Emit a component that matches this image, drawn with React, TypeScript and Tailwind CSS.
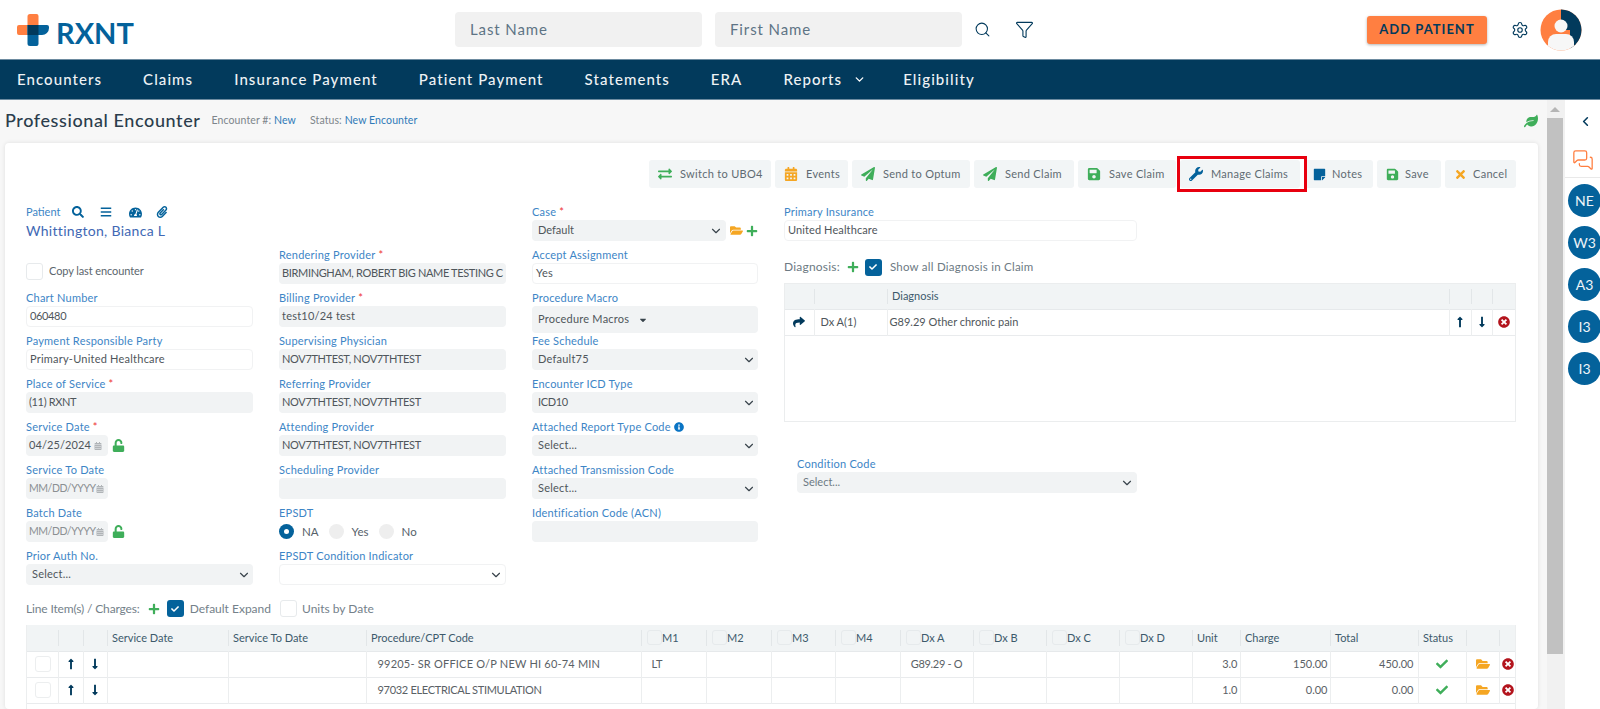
import React from "react";
import { ChevronDown, ChevronLeft, Filter, MessagesSquare, Search, Settings } from "lucide-react";
import {
  FaBars, FaCalendarAlt, FaCaretDown, FaCheck, FaExchangeAlt, FaFolderOpen, FaInfoCircle, FaLeaf,
  FaLongArrowAltDown, FaLongArrowAltUp, FaPaperPlane, FaPaperclip, FaPlus, FaSave, FaSearch, FaShare,
  FaStickyNote, FaTachometerAlt, FaTimes, FaTimesCircle, FaUnlock, FaWrench,
} from "react-icons/fa";

const Logo = () => (
  <div className="flex items-center gap-[7px]">
    <svg width="32" height="32" viewBox="0 0 32 32">
      <path d="M13 0h6.5a2 2 0 0 1 2 2v9h-11v10H2a2 2 0 0 1-2-2v-6a2 2 0 0 1 2-2h8.5V2.500A2.500 2.500 0 0 1 13 0z" fill="#ff7f41" />
      <path d="M10.500 11H30a2 2 0 0 1 2 2v1a7 7 0 0 1-7 7h-3.500v9a2 2 0 0 1-2 2H13a2.500 2.500 0 0 1-2.500-2.500z" fill="#04629b" />
      <rect x="10.500" y="11" width="11" height="10" fill="#023a5c" />
    </svg>
    <span className="mt-[6px] font-['Lato',sans-serif] text-[29px] font-bold leading-none text-[#04629b]">RXNT</span>
  </div>
);

const Avatar = () => (
  <svg width="42" height="42" viewBox="0 0 42 42">
    <defs>
      <clipPath id="avatarClip"><circle cx="21" cy="21" r="20.500" /></clipPath>
    </defs>
    <g clipPath="url(#avatarClip)">
      <rect width="42" height="42" fill="#ff7f41" />
      <path d="M21 0h21v42H30V21H21z" fill="#023a5c" />
      <circle cx="21" cy="17" r="6.500" fill="#f7f7f7" />
      <path d="M8 42V33a8 8 0 0 1 8-8h10a8 8 0 0 1 8 8v9z" fill="#f7f7f7" />
    </g>
  </svg>
);

const navItems = ["Encounters", "Claims", "Insurance Payment", "Patient Payment", "Statements", "ERA", "Reports", "Eligibility"];

const Header = () => (
  <div className="flex h-[59px] items-center bg-white pl-[17px]">
    <div className="w-[438px] shrink-0"><Logo /></div>
    <div className="flex h-[35px] w-[247px] items-center rounded-[4px] bg-[#f1f1f1] pl-[15px] text-[15px] tracking-[0.9px] text-[#5e7485]">Last Name</div>
    <div className="ml-[13px] flex h-[35px] w-[247px] items-center rounded-[4px] bg-[#f1f1f1] pl-[15px] text-[15px] tracking-[0.9px] text-[#5e7485]">First Name</div>
    <Search className="ml-[12px] text-[#023a5c]" size={17} strokeWidth={1.5} />
    <Filter className="ml-[24px] text-[#023a5c]" size={19} strokeWidth={1.4} />
    <div className="ml-[333px] flex h-[28px] w-[120px] items-center justify-center rounded-[3px] bg-[#ff7f41] text-[13px] font-bold tracking-[1px] text-[#023a5c] shadow-[0_1px_3px_rgba(0,0,0,0.3)]">ADD PATIENT</div>
    <Settings className="ml-[24px] text-[#023a5c]" size={18} strokeWidth={1.5} />
    <div className="ml-[11px]"><Avatar /></div>
  </div>
);

const Nav = () => (
  <div className="flex h-[41px] items-center gap-[41px] border-y border-[#6d8ba0] bg-[#023a5c] pl-[17px] text-[15px] font-medium tracking-[1.07px] text-[#eef2f5]">
    {navItems.map((n) => (
      <span key={n} className="flex items-center">
        {n}
        {n === "Reports" && <ChevronDown className="-mr-[4px] ml-[11px] text-white" size={13} strokeWidth={2.5} />}
      </span>
    ))}
  </div>
);

const ToolButton = ({ icon, label, w, gap }: { icon: React.ReactNode; label: string; w: string; gap?: boolean }) => (
  <div className={`flex h-[28px] items-center rounded-[3px] bg-[#f2f5f6] pl-[8px] text-[11px] tracking-[0.3px] text-[#5f6b72] ${gap ? "gap-[5px]" : "gap-[8px]"} ${w}`}>
    <span className="flex w-[15px] justify-center">{icon}</span>
    <span className="whitespace-nowrap">{label}</span>
  </div>
);

const Toolbar = () => (
  <div className="flex h-[28px] justify-end gap-[4px]">
    <ToolButton w="w-[122px]" icon={<FaExchangeAlt className="text-[#3fae5a]" size={14} />} label="Switch to UBO4" />
    <ToolButton w="w-[73px]" icon={<FaCalendarAlt className="text-[#f5a623]" size={14} />} label="Events" />
    <ToolButton w="w-[118px]" icon={<FaPaperPlane className="text-[#3fae5a]" size={14} />} label="Send to Optum" />
    <ToolButton w="w-[100px]" icon={<FaPaperPlane className="text-[#3fae5a]" size={14} />} label="Send Claim" />
    <ToolButton w="w-[98px]" icon={<FaSave className="text-[#3fae5a]" size={14} />} label="Save Claim" />
    <div className="relative">
      <ToolButton w="w-[120px]" icon={<FaWrench className="text-[#04629b]" size={14} />} label="Manage Claims" />
      <div className="absolute -bottom-[4px] -left-[3px] -right-[7px] -top-[4px] z-10 border-[3px] border-[#e8000f]" />
    </div>
    <ToolButton gap w="w-[69px]" icon={<FaStickyNote className="text-[#04629b]" size={13} />} label="Notes" />
    <ToolButton gap w="w-[64px]" icon={<FaSave className="text-[#3fae5a]" size={13} />} label="Save" />
    <ToolButton gap w="w-[71px]" icon={<FaTimes className="text-[#f5a623]" size={13} />} label="Cancel" />
  </div>
);

const Label = ({ text, req, info }: { text: string; req?: boolean; info?: boolean }) => (
  <div className="flex h-[16px] items-center whitespace-nowrap text-[11px] tracking-[0.22px] text-[#3d85c6]">
    {text}
    {req && <span className="ml-[3px] text-[#e33]">*</span>}
    {info && <FaInfoCircle className="ml-[3px] text-[#0a74c4]" size={10} />}
  </div>
);

const Field = ({
  label, value, req, info, white, select, caps,
}: { label: string; value?: string; req?: boolean; info?: boolean; white?: boolean; select?: boolean; caps?: boolean }) => (
  <div className="h-[43px]">
    <Label text={label} req={req} info={info} />
    <div
      className={`flex h-[21px] items-center justify-between overflow-hidden rounded-[4px] pr-[2px] text-[11px] ${select ? "pl-[6px]" : "pl-[3px]"} ${
        caps ? "tracking-[-0.35px]" : "tracking-[0.22px]"
      } ${white ? "border border-[#f1f2f3] bg-white" : "bg-[#f1f3f4]"} text-[#4f565b]`}
    >
      <span className="whitespace-nowrap">{value}</span>
      {select && <ChevronDown className="shrink-0 text-[#39444c]" size={14} strokeWidth={2} />}
    </div>
  </div>
);

const DateField = ({ label, value, req, lock, placeholder }: { label: string; value: string; req?: boolean; lock?: boolean; placeholder?: boolean }) => (
  <div className="h-[43px]">
    <Label text={label} req={req} />
    <div className="flex items-center">
      <div className={`flex h-[21px] w-[82px] items-center justify-between rounded-[4px] bg-[#f1f3f4] pl-[3px] pr-[6px] ${placeholder ? "text-[10.500px] tracking-[-0.45px] text-[#8b8f92]" : "text-[11px] tracking-[0.1px] text-[#4f565b]"}`}>
        <span className="whitespace-nowrap">{value}</span>
        <FaCalendarAlt className="shrink-0 text-[#b0b4b7]" size={8} />
      </div>
      {lock && <FaUnlock className="ml-[4px] text-[#3fae5a]" size={13} />}
    </div>
  </div>
);

const Check = ({ on }: { on?: boolean }) =>
  on ? (
    <div className="flex h-[17px] w-[17px] shrink-0 items-center justify-center rounded-[3px] bg-[#04629b]">
      <FaCheck className="text-white" size={8} />
    </div>
  ) : (
    <div className="h-[17px] w-[17px] shrink-0 rounded-[3px] border border-[#e7eaec] bg-white" />
  );

const Radio = ({ on, label }: { on?: boolean; label: string }) => (
  <div className="flex items-center gap-[8px]">
    {on ? (
      <div className="flex h-[15px] w-[15px] items-center justify-center rounded-full bg-[#04629b]">
        <div className="h-[5px] w-[5px] rounded-full bg-white" />
      </div>
    ) : (
      <div className="h-[15px] w-[15px] rounded-full bg-[#eeeeee]" />
    )}
    <span className="text-[11.500px] text-[#56616a]">{label}</span>
  </div>
);

const ColumnOne = () => (
  <div>
    <div className="h-[43px] pt-[1px]">
      <div className="flex h-[14px] items-center text-[11px] text-[#3d85c6]">
        <span className="w-[46px]">Patient</span>
        <FaSearch className="text-[#04629b]" size={12} />
        <FaBars className="ml-[16px] text-[#04629b]" size={12} />
        <FaTachometerAlt className="ml-[17px] text-[#04629b]" size={13} />
        <FaPaperclip className="ml-[14px] text-[#04629b]" size={12} />
      </div>
      <div className="mt-[2px] text-[14px] leading-[20px] tracking-[0.3px] text-[#4168b4]">Whittington, Bianca L</div>
    </div>
    <div className="flex h-[43px] items-start pt-[16px]">
      <Check />
      <span className="ml-[6px] whitespace-nowrap text-[11px] tracking-[-0.1px] text-[#5b666d]">Copy last encounter</span>
    </div>
    <Field label="Chart Number" value="060480" white caps />
    <Field label="Payment Responsible Party" value="Primary-United Healthcare" white />
    <Field label="Place of Service" value="(11) RXNT" req caps />
    <DateField label="Service Date" value="04/25/2024" req lock />
    <DateField label="Service To Date" value="MM/DD/YYYY" placeholder />
    <DateField label="Batch Date" value="MM/DD/YYYY" placeholder lock />
    <Field label="Prior Auth No." value="Select..." select />
  </div>
);

const ColumnTwo = () => (
  <div className="pt-[43px]">
    <Field label="Rendering Provider" value="BIRMINGHAM, ROBERT BIG NAME TESTING C" req caps />
    <Field label="Billing Provider" value="test10/24 test" req />
    <Field label="Supervising Physician" value="NOV7THTEST, NOV7THTEST" caps />
    <Field label="Referring Provider" value="NOV7THTEST, NOV7THTEST" caps />
    <Field label="Attending Provider" value="NOV7THTEST, NOV7THTEST" caps />
    <Field label="Scheduling Provider" />
    <div className="h-[43px]">
      <Label text="EPSDT" />
      <div className="flex h-[21px] items-center gap-[10px]">
        <Radio on label="NA" />
        <Radio label="Yes" />
        <Radio label="No" />
      </div>
    </div>
    <Field label="EPSDT Condition Indicator" white select />
  </div>
);

const ColumnThree = () => (
  <div>
    <div className="h-[43px]">
      <Label text="Case" req />
      <div className="flex items-center">
        <div className="flex h-[21px] w-[194px] items-center justify-between rounded-[4px] bg-[#f1f3f4] pl-[6px] pr-[3px] text-[11px] text-[#4f565b]">
          Default
          <ChevronDown className="shrink-0 text-[#39444c]" size={14} />
        </div>
        <FaFolderOpen className="ml-[4px] text-[#f5a623]" size={13} />
        <FaPlus className="ml-[3px] text-[#3fae5a]" size={12} />
      </div>
    </div>
    <Field label="Accept Assignment" value="Yes" white />
    <div className="h-[43px]">
      <Label text="Procedure Macro" />
      <div className="flex h-[27px] items-center rounded-[4px] bg-[#f1f3f4] pl-[6px] text-[11px] tracking-[0.22px] text-[#4f565b]">
        Procedure Macros
        <FaCaretDown className="ml-[9px] text-[#39444c]" size={10} />
      </div>
    </div>
    <Field label="Fee Schedule" value="Default75" select />
    <Field label="Encounter ICD Type" value="ICD10" select caps />
    <Field label="Attached Report Type Code" value="Select..." select info />
    <Field label="Attached Transmission Code" value="Select..." select />
    <Field label="Identification Code (ACN)" />
  </div>
);

const DiagnosisTable = () => (
  <div className="h-[139px] border border-[#ebedee] text-[11px] text-[#4f565b]">
    <table className="w-full table-fixed border-collapse">
      <colgroup>
        <col className="w-[29px]" />
        <col className="w-[73px]" />
        <col />
        <col className="w-[22px]" />
        <col className="w-[21px]" />
        <col className="w-[23px]" />
      </colgroup>
      <thead>
        <tr className="h-[25px] border-b border-[#e6e9eb] bg-[#f1f4f5]">
          <th />
          <th className="p-0"><div className="h-[15px] border-l border-[#e2e6e8]" /></th>
          <th className="p-0 text-left font-normal text-[#3d5a6c]"><div className="flex h-[15px] items-center border-l border-[#e2e6e8] pl-[4px]">Diagnosis</div></th>
          <th className="p-0"><div className="h-[15px] border-l border-[#e2e6e8]" /></th>
          <th className="p-0"><div className="h-[15px] border-l border-[#e2e6e8]" /></th>
          <th className="p-0"><div className="h-[15px] border-l border-[#e2e6e8]" /></th>
        </tr>
      </thead>
      <tbody>
        <tr className="h-[26px] border-b border-[#e9ebed]">
          <td className="border-r border-[#eceeef] p-0"><FaShare className="mx-auto text-[#023a5c]" size={12} /></td>
          <td className="border-r border-[#eceeef] p-0 pl-[6px]">Dx A(1)</td>
          <td className="p-0 pl-[2px]">G89.29 Other chronic pain</td>
          <td className="border-x border-[#eceeef] p-0"><FaLongArrowAltUp className="mx-auto text-[#023a5c]" size={12} /></td>
          <td className="border-r border-[#eceeef] p-0"><FaLongArrowAltDown className="mx-auto text-[#023a5c]" size={12} /></td>
          <td className="p-0"><FaTimesCircle className="mx-auto text-[#b3141d]" size={12} /></td>
        </tr>
      </tbody>
    </table>
  </div>
);

const ColumnFour = () => (
  <div>
    <div className="h-[43px]">
      <Label text="Primary Insurance" />
      <div className="flex h-[21px] w-[353px] items-center rounded-[4px] border border-[#f1f2f3] bg-white pl-[3px] text-[11px] tracking-[0.1px] text-[#4f565b]">United Healthcare</div>
    </div>
    <div className="flex h-[36px] items-center pt-[4px]">
      <span className="text-[12px] tracking-[0.2px] text-[#6d7a83]">Diagnosis:</span>
      <FaPlus className="ml-[7px] text-[#3fae5a]" size={12} />
      <div className="ml-[6px]"><Check on /></div>
      <span className="ml-[8px] text-[11.500px] tracking-[0.25px] text-[#6d7a83]">Show all Diagnosis in Claim</span>
    </div>
    <DiagnosisTable />
    <div className="ml-[13px] mt-[34px] w-[340px]">
      <Label text="Condition Code" />
      <div className="flex h-[21px] items-center justify-between rounded-[4px] bg-[#f1f3f4] pl-[6px] pr-[3px] text-[11px] text-[#6d7a83]">
        Select...
        <ChevronDown className="shrink-0 text-[#39444c]" size={14} />
      </div>
    </div>
  </div>
);

const chargeCols = [31, 25, 24, 121, 138, 275, 65, 65, 64, 65, 73, 73, 73, 73, 48, 90, 88, 48, 33, 16];
const headers = ["", "", "", "Service Date", "Service To Date", "Procedure/CPT Code"];
const checkHeaders = ["M1", "M2", "M3", "M4", "Dx A", "Dx B", "Dx C", "Dx D"];
const tailHeaders = ["Unit", "Charge", "Total", "Status", "", ""];

const Td = ({ children, right, center }: { children?: React.ReactNode; right?: boolean; center?: boolean }) => (
  <td className={`border-r border-[#eceeef] p-0 ${right ? "pr-[2px] text-right" : center ? "text-center" : ""}`}>{children}</td>
);

const ChargeRow = ({ code, codeClass, m1, dx, unit, charge, total }: { code: string; codeClass: string; m1?: string; dx?: string; unit: string; charge: string; total: string }) => (
  <tr className="h-[26px] border-b border-[#e9ebed]">
    <Td><div className="ml-[8px] h-[16px] w-[16px] rounded-[3px] border border-[#eceeef]" /></Td>
    <Td><FaLongArrowAltUp className="mx-auto text-[#023a5c]" size={12} /></Td>
    <Td><FaLongArrowAltDown className="mx-auto text-[#023a5c]" size={12} /></Td>
    <Td />
    <Td />
    <Td><span className={`whitespace-nowrap pl-[11px] ${codeClass}`}>{code}</span></Td>
    <Td><span className="pl-[10px]">{m1}</span></Td>
    <Td />
    <Td />
    <Td />
    <Td center><span className="whitespace-nowrap tracking-[-0.3px]">{dx}</span></Td>
    <Td />
    <Td />
    <Td />
    <Td right>{unit}</Td>
    <Td right>{charge}</Td>
    <td className="border-r border-[#eceeef] p-0 pr-[4px] text-right">{total}</td>
    <Td><FaCheck className="mx-auto text-[#3fae5a]" size={12} /></Td>
    <Td><FaFolderOpen className="mx-auto text-[#f5a623]" size={14} /></Td>
    <td className="p-0"><FaTimesCircle className="ml-[2px] text-[#b3141d]" size={12} /></td>
  </tr>
);

const ChargesTable = () => (
  <div className="h-[84px] w-[1490px] border-x border-[#eceeef]">
    <table className="w-full table-fixed border-collapse text-[11px] text-[#5a6166]">
      <colgroup>
        {chargeCols.map((w, i) => <col key={i} style={{ width: w }} />)}
      </colgroup>
      <thead>
        <tr className="h-[26px] border-b border-[#e6e9eb] bg-[#f1f4f5] font-normal text-[#3d5a6c]">
          {headers.map((h, i) => (
            <th key={i} className="p-0 text-left font-normal">
              <div className={`flex h-[16px] items-center whitespace-nowrap pl-[4px] ${i ? "border-l border-[#e2e6e8]" : ""}`}>{h}</div>
            </th>
          ))}
          {checkHeaders.map((h) => (
            <th key={h} className="p-0 text-left font-normal">
              <div className="flex h-[16px] items-center whitespace-nowrap border-l border-[#e2e6e8] pl-[5px]">
                <div className="h-[15px] w-[15px] shrink-0 rounded-[3px] border border-[#e6eaec]" />
                {h}
              </div>
            </th>
          ))}
          {tailHeaders.map((h, i) => (
            <th key={i} className="p-0 text-left font-normal">
              <div className="flex h-[16px] items-center whitespace-nowrap border-l border-[#e2e6e8] pl-[4px]">{h}</div>
            </th>
          ))}
        </tr>
      </thead>
      <tbody>
        <ChargeRow code="99205- SR OFFICE O/P NEW HI 60-74 MIN" codeClass="tracking-[0.2px]" m1="LT" dx="G89.29 - O" unit="3.0" charge="150.00" total="450.00" />
        <ChargeRow code="97032 ELECTRICAL STIMULATION" codeClass="tracking-[-0.3px]" unit="1.0" charge="0.00" total="0.00" />
      </tbody>
    </table>
  </div>
);

const Scrollbar = () => (
  <div className="flex w-[18px] shrink-0 flex-col bg-[#f1f1f1]">
    <div className="flex h-[18px] w-[16px] items-center justify-center">
      <div className="h-0 w-0 border-x-[5px] border-b-[5px] border-x-transparent border-b-[#b5b5b5]" />
    </div>
    <div className="h-[536px] w-[16px] bg-[#c1c1c1]" />
  </div>
);

const Sidebar = () => (
  <div className="w-[35px] shrink-0 overflow-hidden bg-white">
    <div className="flex h-[43px] items-center justify-center pl-[5px]">
      <ChevronLeft className="text-[#023a5c]" size={15} strokeWidth={2.5} />
    </div>
    <div className="flex h-[35px] justify-center border-b border-[#e9e9e9] pt-[6px]">
      <MessagesSquare className="text-[#ff7f41]" size={22} strokeWidth={1.4} />
    </div>
    <div className="flex flex-col gap-[9px] pl-[3px] pt-[6px]">
      {["NE", "W3", "A3", "I3", "I3"].map((t, i) => (
        <div key={i} className="flex h-[33px] w-[33px] items-center justify-center rounded-full bg-[#04629b] text-[14px] text-[#eef4f8]">{t}</div>
      ))}
    </div>
  </div>
);

export default function App() {
  return (
    <div className="flex h-[709px] w-[1600px] flex-col overflow-hidden bg-white font-['Lato',sans-serif]">
      <Header />
      <Nav />
      <div className="flex min-h-0 flex-1">
        <div className="w-[1547px] shrink-0 bg-[#f7f7f7]">
          <div className="flex h-[43px] items-center justify-between pb-[2px] pl-[5px] pr-[9px]">
            <div className="flex items-center">
              <span className="text-[18px] font-medium tracking-[0.6px] text-[#2b3d4c]">Professional Encounter</span>
              <span className="ml-[11px] text-[10.500px] tracking-[0.1px] text-[#7d858b]">Encounter #: <span className="text-[#2f7ab8]">New</span></span>
              <span className="ml-[14px] text-[10.500px] tracking-[0.1px] text-[#7d858b]">Status: <span className="text-[#2f7ab8]">New Encounter</span></span>
            </div>
            <FaLeaf className="text-[#3fae5a]" size={14} />
          </div>
          <div className="ml-[5px] mr-[9px] h-[566px] overflow-hidden rounded-[4px] bg-white pl-[21px] pr-[22px] pt-[17px] shadow-[0_0_4px_rgba(0,0,0,0.1)]">
            <Toolbar />
            <div className="mt-[16px] grid grid-cols-[227px_227px_226px_1fr] gap-x-[26px]">
              <ColumnOne />
              <ColumnTwo />
              <ColumnThree />
              <ColumnFour />
            </div>
            <div className="mt-[9px] flex h-[17px] items-center text-[12px] text-[#74818a]">
              <span className="tracking-[-0.15px]">Line Item(s) / Charges:</span>
              <FaPlus className="ml-[8px] text-[#3fae5a]" size={12} />
              <div className="ml-[7px]"><Check on /></div>
              <span className="ml-[6px]">Default Expand</span>
              <div className="ml-[9px]"><Check /></div>
              <span className="ml-[5px]">Units by Date</span>
            </div>
            <div className="mt-[8px]"><ChargesTable /></div>
          </div>
        </div>
        <Scrollbar />
        <Sidebar />
      </div>
    </div>
  );
}
